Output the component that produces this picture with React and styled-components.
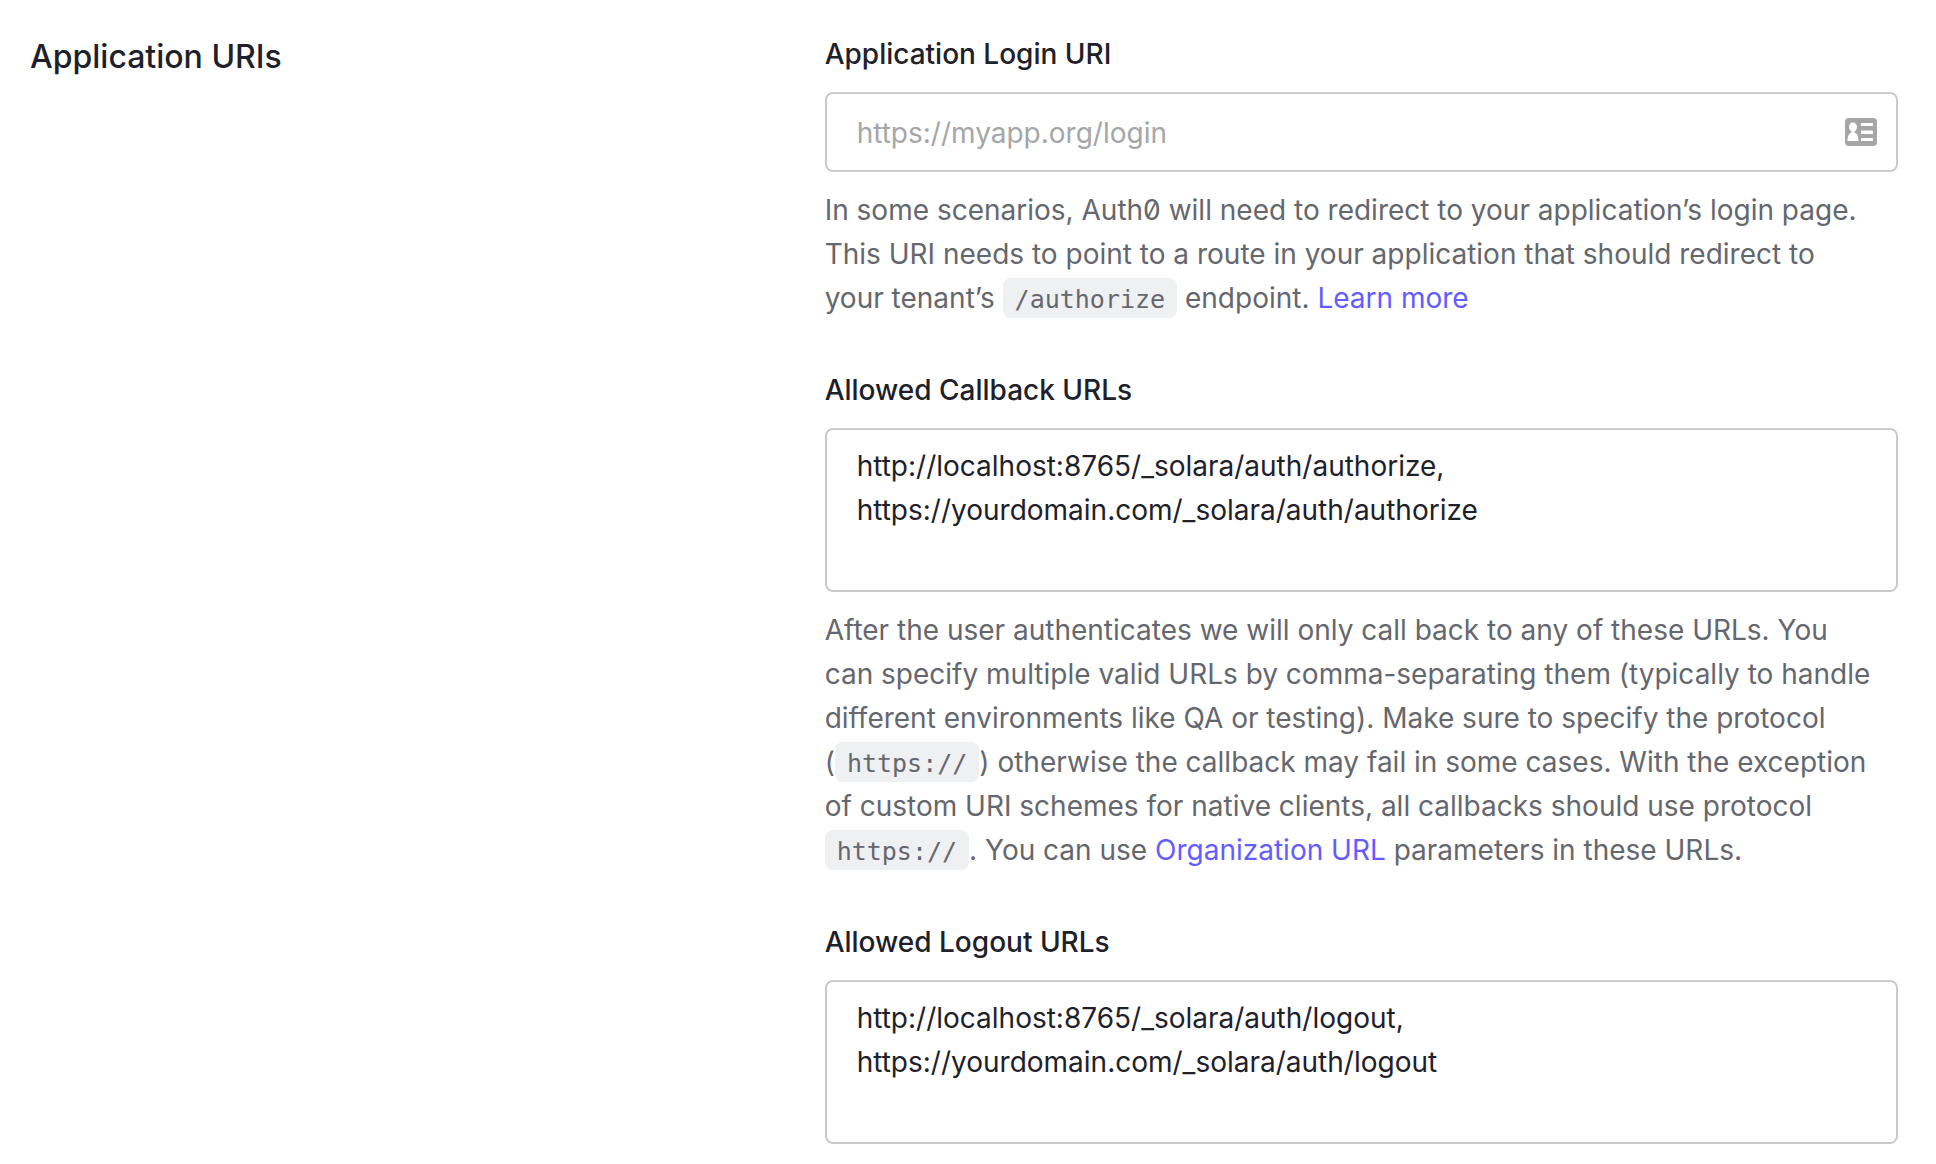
import React from "react";
import styled, { createGlobalStyle } from "styled-components";

const GlobalStyle = createGlobalStyle`
  *, *::before, *::after { box-sizing: border-box; }
  body {
    margin: 0;
    background: #fff;
    color: #1e212a;
    font-family: Inter, "Liberation Sans", sans-serif;
    font-size: 28px;
    line-height: 44px;
  }
`;

const Section = styled.section`
  display: grid;
  grid-template-columns: minmax(0, 5fr) minmax(0, 7fr);
  column-gap: 28px;
  padding: 32px 38px 20px 30px;
`;

const Title = styled.h2`
  margin: 0;
  font-size: 32px;
  line-height: 50px;
  font-weight: 500;
`;

const Fields = styled.div`
  display: flex;
  flex-direction: column;
  gap: 48px;
`;

const Field = styled.div`
  display: flex;
  flex-direction: column;
  gap: 16px;
`;

const Label = styled.label`
  font-weight: 500;
`;

const Control = styled.div`
  display: flex;
  align-items: center;
  padding-right: 19px;
  border: 2px solid #c9cace;
  border-radius: 8px;
  background: #fff;
`;

const TextInput = styled.input`
  flex: 1;
  min-width: 0;
  padding: 17px 30px 15px;
  border: 0;
  outline: 0;
  background: transparent;
  color: inherit;
  font: inherit;

  &::placeholder {
    color: #a5a6a9;
    opacity: 1;
  }
`;

const TextArea = styled.textarea`
  display: block;
  width: 100%;
  padding: 14px 30px;
  border: 2px solid #c9cace;
  border-radius: 8px;
  outline: 0;
  background: #fff;
  color: inherit;
  font: inherit;
  resize: none;
  overflow: auto;
`;

const Help = styled.p`
  margin: 0;
  padding-right: 22px;
  color: #65676e;
  font-feature-settings: "zero";
`;

const Code = styled.code`
  padding: 7px 12px 4px;
  border-radius: 8px;
  background: #eff0f2;
  font-family: "DejaVu Sans Mono", monospace;
  font-size: 25px;
  line-height: 28px;
`;

const Link = styled.a`
  color: #635dff;
  text-decoration: none;
`;

function ContactCardIcon() {
  return (
    <svg width="32" height="28" viewBox="0 0 32 28" aria-hidden="true">
      <rect width="32" height="28" rx="4" fill="#a6a6a6" />
      <ellipse cx="8" cy="9" rx="4" ry="4.5" fill="#fff" />
      <path d="M6.5 12h3v2.5c2.5.8 4 3.5 4 8.5h-11c0-5 1.5-7.7 4-8.5z" fill="#fff" />
      <path d="M16 5h12v3H16zM16 12.5h12V16H16zM16 20h12v3H16z" fill="#fff" />
    </svg>
  );
}

export default function App() {
  return (
    <>
      <GlobalStyle />
      <Section>
        <Title>Application URIs</Title>
        <Fields>
          <Field>
            <Label htmlFor="login-uri">Application Login URI</Label>
            <Control>
              <TextInput id="login-uri" type="url" placeholder="https://myapp.org/login" />
              <ContactCardIcon />
            </Control>
            <Help>
              In some scenarios, Auth0 will need to redirect to your application’s login page. This
              URI needs to point to a route in your application that should redirect to your
              tenant’s <Code>/authorize</Code> endpoint. <Link href="#login-uri">Learn more</Link>
            </Help>
          </Field>
          <Field>
            <Label htmlFor="callback-urls">Allowed Callback URLs</Label>
            <TextArea
              id="callback-urls"
              rows={3}
              spellCheck={false}
              defaultValue={
                "http://localhost:8765/_solara/auth/authorize,\nhttps://yourdomain.com/_solara/auth/authorize"
              }
            />
            <Help>
              After the user authenticates we will only call back to any of these URLs. You can
              specify multiple valid URLs by comma-separating them (typically to handle different
              environments like QA or testing). Make sure to specify the protocol (
              <Code>https://</Code>) otherwise the callback may fail in some cases. With the
              exception of custom URI schemes for native clients, all callbacks should use
              protocol <Code>https://</Code>. You can use{" "}
              <Link href="#callback-urls">Organization URL</Link> parameters in these URLs.
            </Help>
          </Field>
          <Field>
            <Label htmlFor="logout-urls">Allowed Logout URLs</Label>
            <TextArea
              id="logout-urls"
              rows={3}
              spellCheck={false}
              defaultValue={
                "http://localhost:8765/_solara/auth/logout,\nhttps://yourdomain.com/_solara/auth/logout"
              }
            />
          </Field>
        </Fields>
      </Section>
    </>
  );
}
